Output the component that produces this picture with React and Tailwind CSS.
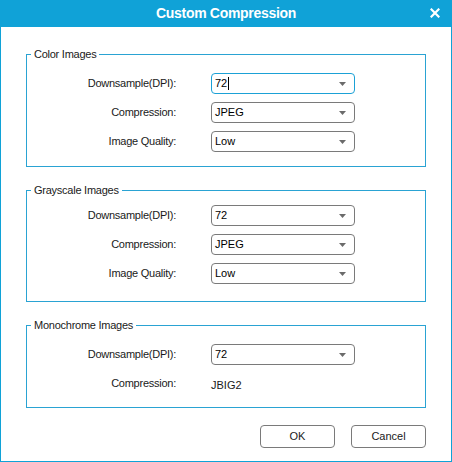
const font = { fontFamily: '"Liberation Sans", Arial, sans-serif' };

function Arrow() {
  return (
    <svg width="7" height="4" viewBox="0 0 7 4" className="shrink-0">
      <path d="M0 0 L7 0 L3.5 4 Z" fill="#6b6b6b" />
    </svg>
  );
}

function Select({ value, focused }) {
  return (
    <div
      className={
        'w-[144px] h-[21px] rounded-[4px] border flex items-center justify-between pl-[3px] pr-[8px] text-[11px] text-black bg-white ' +
        (focused ? 'border-[#1ba1d6]' : 'border-[#7a7a7a]')
      }
    >
      <span className="flex items-center">
        {value}
        {focused && <span className="inline-block w-px h-[13px] bg-black ml-px" />}
      </span>
      <Arrow />
    </div>
  );
}

function Row({ label, children }) {
  return (
    <div className="flex items-center h-[21px]">
      <div className="w-[149px] text-right text-[11px] tracking-[-0.25px] text-[#1a1a1a]">{label}</div>
      <div className="ml-[35px]">{children}</div>
    </div>
  );
}

function Group({ title, className, children }) {
  return (
    <fieldset className={'border border-[#2aa3d3] ' + className}>
      <legend className="ml-[4px] px-[3px] text-[11px] leading-[13px] tracking-[-0.25px] text-[#1a1a1a]">{title}</legend>
      <div className="flex flex-col gap-[8px]">{children}</div>
    </fieldset>
  );
}

export default function App() {
  return (
    <div style={font} className="w-[452px] h-[462px] flex flex-col bg-white border-x border-b border-[#10a2d7]">
      <div className="relative h-[27px] bg-[#10a2d7] flex items-center justify-center shrink-0 -mx-px">
        <span className="text-white font-bold text-[14px] tracking-[-0.3px]">Custom Compression</span>
        <svg className="absolute right-[12px] top-[8px]" width="10" height="10" viewBox="0 0 10 10">
          <path d="M1.5 1.5 L8.5 8.5 M8.5 1.5 L1.5 8.5" stroke="white" strokeWidth="2.2" strokeLinecap="square" />
        </svg>
      </div>
      <div className="flex-1 flex flex-col px-[25px] pt-[21px]">
        <Group title="Color Images" className="pt-[12px] pb-[14px]">
          <Row label="Downsample(DPI):"><Select value="72" focused /></Row>
          <Row label="Compression:"><Select value="JPEG" /></Row>
          <Row label="Image Quality:"><Select value="Low" /></Row>
        </Group>
        <Group title="Grayscale Images" className="mt-[17px] pt-[8px] pb-[17px]">
          <Row label="Downsample(DPI):"><Select value="72" /></Row>
          <Row label="Compression:"><Select value="JPEG" /></Row>
          <Row label="Image Quality:"><Select value="Low" /></Row>
        </Group>
        <Group title="Monochrome Images" className="mt-[17px] pt-[12px] pb-[13px]">
          <Row label="Downsample(DPI):"><Select value="72" /></Row>
          <Row label="Compression:">
            <span className="text-[11px] text-[#1a1a1a] pl-0">JBIG2</span>
          </Row>
        </Group>
        <div className="flex justify-end gap-[16px] mt-[17px]">
          <button className="w-[75px] h-[23px] rounded-[4px] border border-[#7a7a7a] bg-white text-[11px] text-[#1a1a1a]">OK</button>
          <button className="w-[75px] h-[23px] rounded-[4px] border border-[#7a7a7a] bg-white text-[11px] text-[#1a1a1a]">Cancel</button>
        </div>
      </div>
    </div>
  );
}
